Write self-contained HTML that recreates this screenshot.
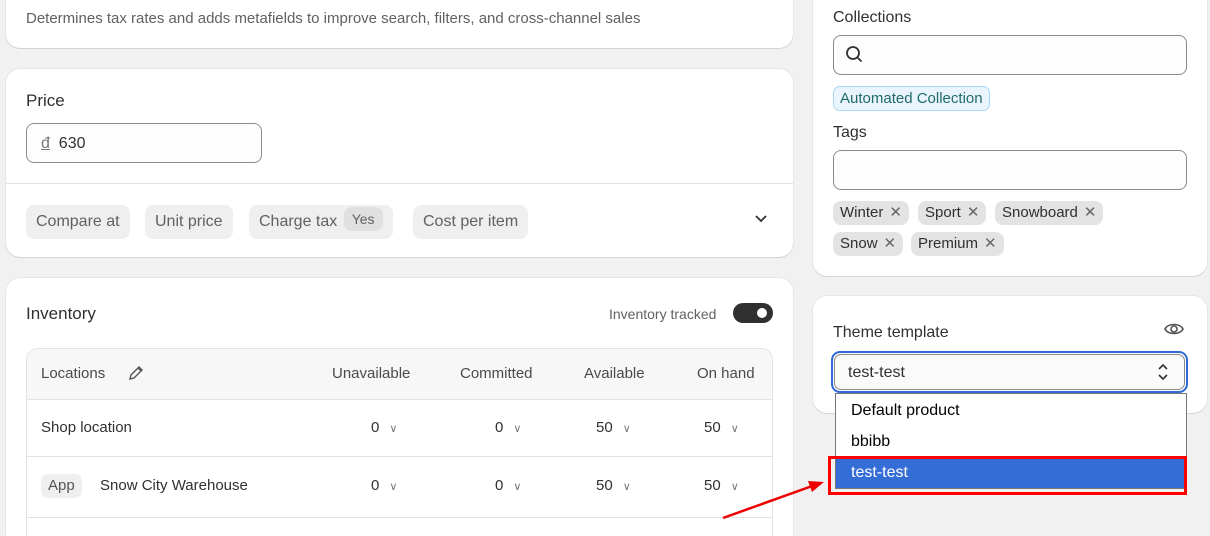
<!DOCTYPE html>
<html><head><meta charset="utf-8"><style>
*{box-sizing:border-box;margin:0;padding:0}
html,body{width:1210px;height:536px;overflow:hidden}
body{background:#f1f1f1;font-family:"Liberation Sans",sans-serif;color:#303030;position:relative;font-size:15px}
.a{position:absolute}
.card{position:absolute;background:#fff;border-radius:14px;box-shadow:0 1px 0 #d4d4d4,0 0 0 1px #e6e6e6}
.chip{position:absolute;top:205px;height:34px;background:#efefef;border-radius:8px;color:#616161;font-size:16px;line-height:34px;padding:0 10px}
.tag{position:absolute;height:24px;background:#e3e3e3;border-radius:8px;font-size:15px;line-height:24px;padding:0 7px;color:#303030}
.tag i{font-style:normal;color:#666;margin-left:6px}
.th{position:absolute;top:365px;font-size:15px;color:#4a4a4a}
.td{position:absolute;font-size:15px;color:#303030}
.cv{color:#777;font-size:11px;margin-left:10px}
</style></head><body>
<div class="card" style="left:6px;top:-14px;width:787px;height:62px"></div>
<div class="a" style="left:26px;top:10px;font-size:15px;color:#616161">Determines tax rates and adds metafields to improve search, filters, and cross-channel sales</div>

<div class="card" style="left:6px;top:69px;width:787px;height:188px"></div>
<div class="a" style="left:26px;top:91px;font-size:17px">Price</div>
<div class="a" style="left:26px;top:123px;width:236px;height:40px;border:1px solid #8a8a8a;border-radius:8px;background:#fdfdfd;font-size:16px;line-height:40px;padding-left:14px"><u style="color:#777">đ</u>&nbsp; 630</div>
<div class="a" style="left:6px;top:183px;width:787px;height:1px;background:#e3e3e3"></div>
<div class="chip" style="left:26px">Compare at</div>
<div class="chip" style="left:145px">Unit price</div>
<div class="chip" style="left:249px">Charge tax <span style="display:inline-block;background:#e0e0e0;border-radius:8px;padding:0 8px;line-height:24px;font-size:14px;margin-left:2px;vertical-align:2px">Yes</span></div>
<div class="chip" style="left:413px">Cost per item</div>
<svg class="a" style="left:754px;top:213px" width="14" height="12"><path d="M2 3l5 5 5-5" stroke="#303030" stroke-width="1.8" fill="none"/></svg>

<div class="card" style="left:6px;top:278px;width:787px;height:270px"></div>
<div class="a" style="left:26px;top:304px;font-size:17px">Inventory</div>
<div class="a" style="left:609px;top:306px;font-size:14px;color:#616161">Inventory tracked</div>
<div class="a" style="left:733px;top:303px;width:40px;height:20px;border-radius:10px;background:#303030"><div class="a" style="left:24px;top:5px;width:10px;height:10px;border-radius:5px;background:#fff"></div></div>
<div class="a" style="left:26px;top:348px;width:747px;height:200px;border:1px solid #e3e3e3;border-radius:12px;overflow:hidden">
<div class="a" style="left:0;top:0;width:747px;height:51px;background:#f7f7f7;border-bottom:1px solid #e3e3e3"></div>
<div class="a" style="left:0;top:107px;width:747px;height:1px;background:#e3e3e3"></div>
<div class="a" style="left:0;top:168px;width:747px;height:1px;background:#e3e3e3"></div>
</div>
<div class="th" style="left:41px">Locations</div>
<svg class="a" style="left:127px;top:364px" width="18" height="18"><path d="M3 15l1-4 8-8 3 3-8 8z M11 4l3 3" stroke="#555" stroke-width="1.4" fill="none"/></svg>
<div class="th" style="left:332px">Unavailable</div>
<div class="th" style="left:460px">Committed</div>
<div class="th" style="left:584px">Available</div>
<div class="th" style="left:697px">On hand</div>
<div class="td" style="left:41px;top:419px">Shop location</div>
<div class="td" style="left:41px;top:474px;background:#efefef;border-radius:7px;padding:0 7px;line-height:24px;color:#555">App</div>
<div class="td" style="left:100px;top:477px">Snow City Warehouse</div>
<div class="td" style="left:371px;top:419px">0<span class="cv">∨</span></div>
<div class="td" style="left:495px;top:419px">0<span class="cv">∨</span></div>
<div class="td" style="left:596px;top:419px">50<span class="cv">∨</span></div>
<div class="td" style="left:704px;top:419px">50<span class="cv">∨</span></div>
<div class="td" style="left:371px;top:477px">0<span class="cv">∨</span></div>
<div class="td" style="left:495px;top:477px">0<span class="cv">∨</span></div>
<div class="td" style="left:596px;top:477px">50<span class="cv">∨</span></div>
<div class="td" style="left:704px;top:477px">50<span class="cv">∨</span></div>

<div class="card" style="left:813px;top:-14px;width:394px;height:290px"></div>
<div class="a" style="left:833px;top:9px;font-size:16px">Collections</div>
<div class="a" style="left:833px;top:35px;width:354px;height:40px;border:1px solid #8a8a8a;border-radius:8px;background:#fdfdfd"></div>
<svg class="a" style="left:845px;top:45px" width="20" height="20"><circle cx="8" cy="8" r="6" stroke="#303030" stroke-width="1.8" fill="none"/><path d="M12.5 12.5l4 4" stroke="#303030" stroke-width="1.8"/></svg>
<div class="a" style="left:833px;top:86px;height:25px;border:1px solid #a8d8f8;background:#eaf4fc;border-radius:7px;padding:0 6px;line-height:23px;color:#1e6b6b;font-size:15px">Automated Collection</div>
<div class="a" style="left:833px;top:124px;font-size:16px">Tags</div>
<div class="a" style="left:833px;top:150px;width:354px;height:40px;border:1px solid #8a8a8a;border-radius:8px;background:#fdfdfd"></div>
<div class="tag" style="left:833px;top:201px">Winter<i>✕</i></div>
<div class="tag" style="left:918px;top:201px">Sport<i>✕</i></div>
<div class="tag" style="left:995px;top:201px">Snowboard<i>✕</i></div>
<div class="tag" style="left:833px;top:232px">Snow<i>✕</i></div>
<div class="tag" style="left:911px;top:232px">Premium<i>✕</i></div>

<div class="card" style="left:813px;top:296px;width:394px;height:117px"></div>
<div class="a" style="left:833px;top:324px;font-size:16px">Theme template</div>
<svg class="a" style="left:1163px;top:320px" width="22" height="18"><path d="M2 9c3-6 15-6 18 0c-3 6-15 6-18 0z" stroke="#555" stroke-width="1.6" fill="none"/><circle cx="11" cy="9" r="3" stroke="#555" stroke-width="1.6" fill="none"/></svg>
<div class="a" style="left:831px;top:351px;width:357px;height:42px;border:2px solid #2f6bd8;border-radius:9px"></div>
<div class="a" style="left:834px;top:354px;width:351px;height:36px;border:1px solid #8a8a8a;border-radius:7px;background:#fafafa;font-size:16px;line-height:36px;padding-left:13px">test-test</div>
<svg class="a" style="left:1156px;top:363px" width="14" height="18"><path d="M3 6l4-4 4 4M3 12l4 4 4-4" stroke="#303030" stroke-width="1.6" fill="none"/></svg>
<div class="a" style="left:835px;top:393px;width:352px;height:96px;background:#fff;border:1px solid #777"></div>
<div class="a" style="left:851px;top:402px;font-size:16px;color:#000">Default product</div>
<div class="a" style="left:851px;top:433px;font-size:16px;color:#000">bbibb</div>
<div class="a" style="left:836px;top:456px;width:350px;height:32px;background:#356dd6"></div>
<div class="a" style="left:851px;top:464px;font-size:16px;color:#fff">test-test</div>
<div class="a" style="left:828px;top:456px;width:359px;height:39px;border:3px solid #f00"></div>
<svg class="a" style="left:0;top:0" width="1210" height="536"><path d="M723 518L815 485" stroke="#e00" stroke-width="2.5"/><path d="M824 482L808 481L812 492z" fill="#e00"/></svg>
</body></html>
